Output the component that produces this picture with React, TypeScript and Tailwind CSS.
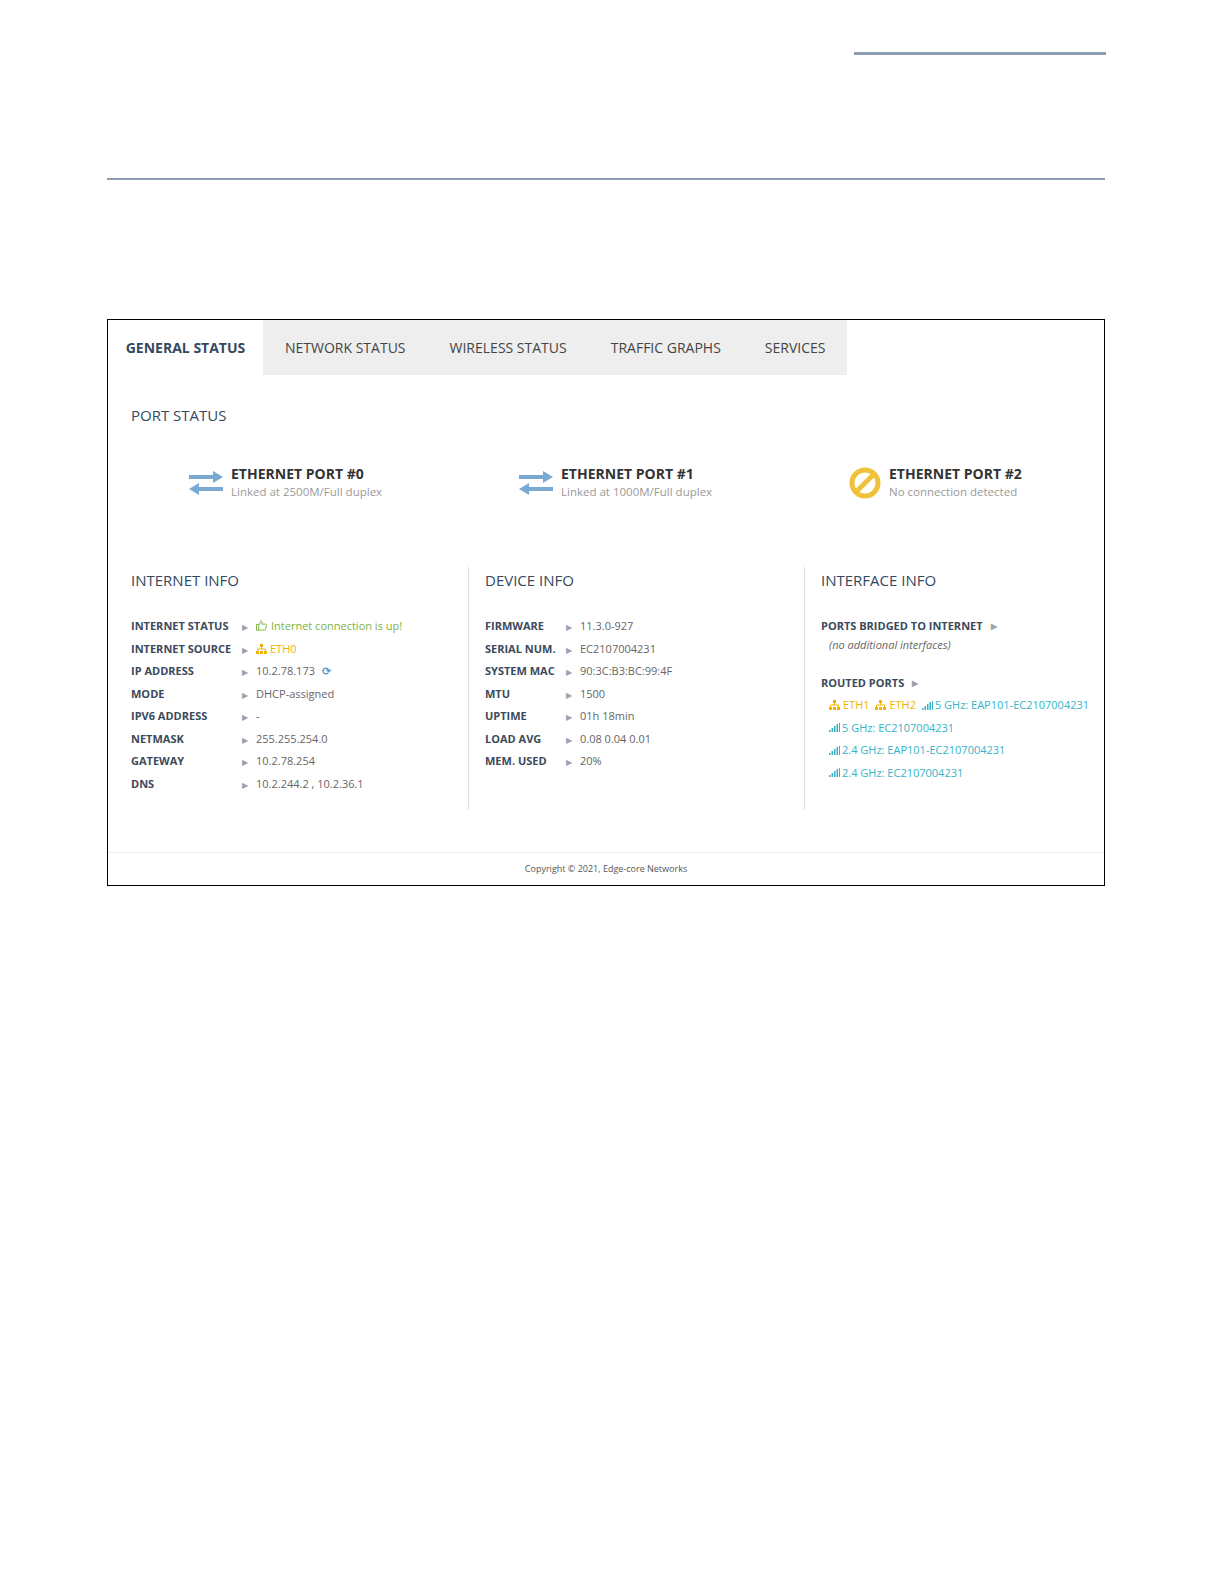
import React from "react";

const Arrow = () => (
  <span className="text-[#9ca3af] text-[8px] leading-none">▶</span>
);

const Swap = () => (
  <svg width="34" height="26" viewBox="0 0 34 26" className="shrink-0">
    <path d="M0 5h24V1l10 6-10 6V9H0z" fill="#7aaad4" />
    <path d="M34 17H10v-4L0 19l10 6v-4h24z" fill="#7aaad4" />
  </svg>
);

const Ban = () => (
  <svg width="32" height="32" viewBox="0 0 32 32" className="shrink-0">
    <circle cx="16" cy="16" r="13" fill="none" stroke="#f0c23b" strokeWidth="5" />
    <path d="M7 25L25 7" stroke="#f0c23b" strokeWidth="5" />
  </svg>
);

const Thumb = () => (
  <svg width="11" height="11" viewBox="0 0 12 12" className="inline-block mr-[4px] -mt-[3px]">
    <rect x="0.5" y="5" width="2.5" height="6" fill="none" stroke="#7cb342" />
    <path d="M3 5.5L5.5 1c1 0 1.5.8 1.2 2L6.3 4.5H10.5c.8 0 1.2.7 1 1.4L10.3 10.3c-.2.5-.6.7-1 .7H3" fill="none" stroke="#7cb342" />
  </svg>
);

const Sitemap = () => (
  <svg width="11" height="10" viewBox="0 0 11 10" className="inline-block mr-[3px] -mt-[2px]">
    <rect x="4" y="0" width="3" height="3" fill="#f0b400" />
    <path d="M5.5 3v2M1.5 7V5h8v2" stroke="#f0b400" fill="none" />
    <rect x="0" y="7" width="3" height="3" fill="#f0b400" />
    <rect x="4" y="7" width="3" height="3" fill="#f0b400" />
    <rect x="8" y="7" width="3" height="3" fill="#f0b400" />
  </svg>
);

const Signal = () => (
  <svg width="11" height="9" viewBox="0 0 11 9" className="inline-block mr-[2px] -mt-[2px]">
    <rect x="0" y="7" width="1.5" height="2" fill="#35b4c8" />
    <rect x="2.5" y="5" width="1.5" height="4" fill="#35b4c8" />
    <rect x="5" y="3" width="1.5" height="6" fill="#35b4c8" />
    <rect x="7.5" y="1" width="1.5" height="8" fill="#35b4c8" />
    <rect x="10" y="0" width="1" height="9" fill="#35b4c8" />
  </svg>
);

const Row = ({ label, w, children }: { label: string; w: string; children: React.ReactNode }) => (
  <div className="flex items-center h-[22.5px] text-[11px]">
    <span className={`${w} font-bold text-[#3b4a5a]`}>{label}</span>
    <span className="w-[14px]"><Arrow /></span>
    <span className="text-[#666]">{children}</span>
  </div>
);

const Port = ({ icon, title, sub }: { icon: React.ReactNode; title: string; sub: string }) => (
  <div className="flex items-center gap-[8px] w-[330px] shrink-0">
    {icon}
    <div>
      <div className="text-[14px] font-bold text-[#333] leading-[18px]">{title}</div>
      <div className="text-[11.5px] text-[#999] leading-[18px]">{sub}</div>
    </div>
  </div>
);

export default function App() {
  const font = { fontFamily: '"Open Sans", "Noto Sans", sans-serif' };
  return (
    <div className="w-full h-screen overflow-hidden bg-white" style={font}>
      <div className="h-[52px]" />
      <div className="ml-[854px] w-[252px] h-[3px] bg-[#8d9db2]" />
      <div className="h-[123px]" />
      <div className="ml-[107px] w-[998px] h-[2px] bg-[#8d9db2]" />
      <div className="h-[139px]" />
      <div className="ml-[107px] w-[998px] h-[567px] border border-black flex flex-col">
        <div className="flex h-[55px] text-[14px] text-[#444]">
          <div className="w-[155px] flex items-center justify-center font-bold text-[#34495e]">GENERAL STATUS</div>
          <div className="bg-[#eeeeee] flex items-center">
            <div className="px-[22px]">NETWORK STATUS</div>
            <div className="px-[22px]">WIRELESS STATUS</div>
            <div className="px-[22px]">TRAFFIC GRAPHS</div>
            <div className="px-[22px]">SERVICES</div>
          </div>
        </div>
        <div className="pl-[23px] pt-[29px] text-[15px] text-[#34495e]">PORT STATUS</div>
        <div className="flex pl-[81px] pt-[38px]">
          <Port icon={<Swap />} title="ETHERNET PORT #0" sub="Linked at 2500M/Full duplex" />
          <Port icon={<Swap />} title="ETHERNET PORT #1" sub="Linked at 1000M/Full duplex" />
          <Port icon={<Ban />} title="ETHERNET PORT #2" sub="No connection detected" />
        </div>
        <div className="flex mt-[66px] h-[243px]">
          <div className="w-[360px] pl-[23px] pt-[2px]">
            <div className="text-[15px] text-[#34495e] mb-[24px]">INTERNET INFO</div>
            <Row label="INTERNET STATUS" w="w-[111px]"><span className="text-[#7cb342]"><Thumb />Internet connection is up!</span></Row>
            <Row label="INTERNET SOURCE" w="w-[111px]"><span className="text-[#f0b400]"><Sitemap />ETH0</span></Row>
            <Row label="IP ADDRESS" w="w-[111px]">10.2.78.173 <span className="text-[#5b9bd5] ml-[4px] font-bold">⟳</span></Row>
            <Row label="MODE" w="w-[111px]">DHCP-assigned</Row>
            <Row label="IPV6 ADDRESS" w="w-[111px]">-</Row>
            <Row label="NETMASK" w="w-[111px]">255.255.254.0</Row>
            <Row label="GATEWAY" w="w-[111px]">10.2.78.254</Row>
            <Row label="DNS" w="w-[111px]">10.2.244.2 , 10.2.36.1</Row>
          </div>
          <div className="w-[336px] border-l border-[#ddd] pl-[16px] pt-[2px]">
            <div className="text-[15px] text-[#34495e] mb-[24px]">DEVICE INFO</div>
            <Row label="FIRMWARE" w="w-[81px]">11.3.0-927</Row>
            <Row label="SERIAL NUM." w="w-[81px]">EC2107004231</Row>
            <Row label="SYSTEM MAC" w="w-[81px]">90:3C:B3:BC:99:4F</Row>
            <Row label="MTU" w="w-[81px]">1500</Row>
            <Row label="UPTIME" w="w-[81px]">01h 18min</Row>
            <Row label="LOAD AVG" w="w-[81px]">0.08 0.04 0.01</Row>
            <Row label="MEM. USED" w="w-[81px]">20%</Row>
          </div>
          <div className="flex-1 border-l border-[#ddd] pl-[16px] pt-[2px] text-[11px]">
            <div className="text-[15px] text-[#34495e] mb-[24px]">INTERFACE INFO</div>
            <div className="font-bold text-[#3b4a5a] h-[22px] flex items-center gap-[8px]">PORTS BRIDGED TO INTERNET <Arrow /></div>
            <div className="italic text-[#666] pl-[8px] h-[22px]">(no additional interfaces)</div>
            <div className="font-bold text-[#3b4a5a] h-[22px] flex items-center gap-[8px] mt-[13px]">ROUTED PORTS <Arrow /></div>
            <div className="pl-[8px] text-[#35b4c8] leading-[22.5px]">
              <div><span className="text-[#f0b400]"><Sitemap />ETH1</span> <span className="text-[#f0b400] ml-[3px]"><Sitemap />ETH2</span> <span className="ml-[3px]"><Signal />5 GHz: EAP101-EC2107004231</span></div>
              <div><Signal />5 GHz: EC2107004231</div>
              <div><Signal />2.4 GHz: EAP101-EC2107004231</div>
              <div><Signal />2.4 GHz: EC2107004231</div>
            </div>
          </div>
        </div>
        <div className="mt-auto border-t border-[#eee] h-[33px] flex items-center justify-center text-[9px] text-[#555]">
          Copyright © 2021, Edge-core Networks
        </div>
      </div>
    </div>
  );
}
